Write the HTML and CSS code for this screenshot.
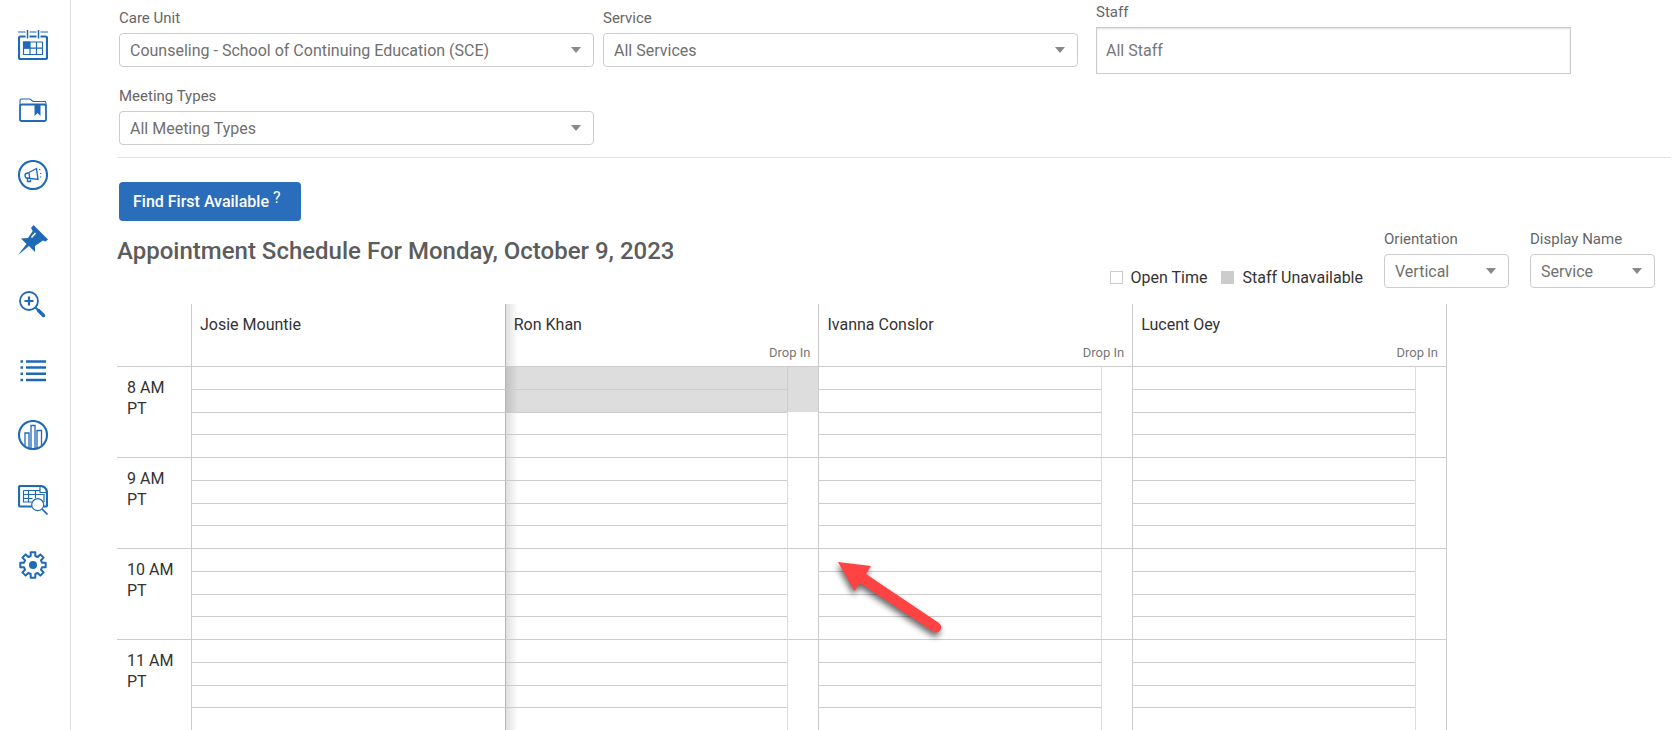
FILE: index.html
```html
<!DOCTYPE html>
<html lang="en">
<head>
    <meta charset="UTF-8">
    <meta name="viewport" content="width=device-width, initial-scale=1.0">
    <title>Appointment Schedule</title>
    <link rel="stylesheet" href="styles.css">
</head>
<body>

    <nav class="sidebar" aria-label="Main">
        <a href="#" aria-label="Calendar">
            <svg viewBox="0 0 30 30">
                <path d="M0 2h7.500M11.500 2h7M22.500 2H30" stroke-width="1.200"/>
                <path d="M9.500 0v8.500M20.500 0v8.500" stroke-width="1.500"/>
                <path d="M7.500 6.500H2.500Q1 6.500 1 8v19.500Q1 29 2.500 29h25q1.500 0 1.500-1.500V8q0-1.500-1.500-1.500h-5M11.500 6.500h7" stroke-width="2.200"/>
                <path d="M5.500 12h19v12.500h-19zM12 12v12.500M18.500 12v12.500M5.500 18.200h19" stroke-width="1.200"/>
                <path class="solid" d="M5 11.500h7v7H5z"/>
            </svg>
        </a>
        <a href="#" aria-label="Cases">
            <svg viewBox="0 0 30 30">
                <path d="M2 11V5.500L3 4h9l3 2.500h12.500l.5 2V11" stroke-width="1.100"/>
                <path d="M2 11.500Q2 9.500 4 9.500h22q2 0 2 2v13q0 1.500-1.500 1.500h-23Q2 26 2 24.500z" stroke-width="1.800"/>
                <path class="solid" d="M16.500 9.500h6v11.500l-3-3-3 3z"/>
            </svg>
        </a>
        <a href="#" aria-label="Campaigns">
            <svg viewBox="0 0 30 30">
                <circle cx="15" cy="15" r="14" stroke-width="2.100"/>
                <path d="M10 13l8.500-4.500 1.500 11-10-1.500q-3 .5-3-2.500 0-2.500 3-2.500zM11 13l.8 5M9.500 18.500v3h3v-3" stroke-width="1.400"/>
                <path d="M21 9.500h1.300M22 13.500h1.300M22 17h1.300" stroke-width="1.200"/>
            </svg>
        </a>
        <a href="#" aria-label="Pinned">
            <svg viewBox="0 0 30 30">
                <path class="solid" d="M15.500 0L30 14.500l-2.500 2L25 15.500l-8 5.500v6l-6-6L0 30l8.500-11L3 13.500l7-.5 4.700-7-1.700-3z"/>
                <path class="shine" d="M13.500 12.500l4-4.500" stroke-width="1.500"/>
            </svg>
        </a>
        <a href="#" aria-label="Advanced search">
            <svg viewBox="0 0 30 30">
                <circle cx="11" cy="11" r="9" stroke-width="1.800"/>
                <path d="M6.500 11h9M11 6.500v9" stroke-width="2.200"/>
                <path d="M17.500 17.500l4 4" stroke-width="2"/>
                <path d="M20.500 20.500l5 5" stroke-width="3.500" stroke-linecap="round"/>
            </svg>
        </a>
        <a href="#" aria-label="Lists">
            <svg viewBox="0 0 30 30">
                <path d="M2.500 6.500h2.500M8 6.500h20M2.500 12.500h2.500M8 12.500h20M2.500 18.800h2.500M8 18.800h20M2.500 25h2.500M8 25h20" stroke-width="2.600"/>
            </svg>
        </a>
        <a href="#" aria-label="Reports">
            <svg viewBox="0 0 30 30">
                <circle cx="15" cy="15" r="14" stroke-width="2.100"/>
                <path d="M7 26V13h4v15M13 28V5.500h4V28M19 28V10.500h4.500V26" stroke-width="1.300"/>
            </svg>
        </a>
        <a href="#" aria-label="Report search">
            <svg viewBox="0 0 30 30">
                <path d="M14 21.500H2.500Q1 21.500 1 20V2.500Q1 1 2.500 1H23q6 1 6 7v12q0 1.500-1.500 1.500H26" stroke-width="2.200"/>
                <path d="M22 1.500v6h6.500M5.500 5.500H22M5.500 5.500V17H14M5.500 9.500H26M5.500 13.500h9M10.500 5.500V17M17.500 5.500V13M26 9v8" stroke-width="1.200"/>
                <circle class="lens" cx="19.700" cy="19.700" r="6" stroke-width="1.200"/>
                <path d="M24 24l5.500 5.500" stroke-width="1.700"/>
            </svg>
        </a>
        <a href="#" aria-label="Settings">
            <svg viewBox="-15 -15 30 30">
                <path d="M-2.300-9V-12.700H2.300V-9L4.740-7.990L7.350-10.600L10.600-7.350L7.990-4.740L9-2.300H12.700V2.300H9L7.990 4.740L10.600 7.350L7.350 10.600L4.740 7.990L2.300 9V12.700H-2.300V9L-4.740 7.990L-7.350 10.600L-10.600 7.350L-7.990 4.740L-9 2.300H-12.700V-2.300H-9L-7.990-4.740L-10.600-7.350L-7.350-10.600L-4.740-7.990z" stroke-width="2" stroke-linejoin="round"/>
                <circle class="solid" r="4"/>
            </svg>
        </a>
    </nav>

    <main class="content">
        <form class="filters">
            <div class="field">
                <label for="careUnit">Care Unit</label>
                <select id="careUnit"><option>Counseling - School of Continuing Education (SCE)</option></select>
            </div>
            <div class="field">
                <label for="service">Service</label>
                <select id="service"><option>All Services</option></select>
            </div>
            <div class="field staff">
                <label for="staff">Staff</label>
                <input type="text" id="staff" placeholder="All Staff">
            </div>
            <div class="field">
                <label for="meetingTypes">Meeting Types</label>
                <select id="meetingTypes"><option>All Meeting Types</option></select>
            </div>
        </form>

        <hr>

        <button type="button" class="find-button">Find First Available<span class="help">?</span></button>

        <div class="title-row">
            <h1>Appointment Schedule For Monday, October 9, 2023</h1>
            <div class="legend">
                <span class="swatch"></span>Open Time
                <span class="swatch unavailable"></span>Staff Unavailable
            </div>
            <div class="field small">
                <label for="orientation">Orientation</label>
                <select id="orientation"><option>Vertical</option></select>
            </div>
            <div class="field small">
                <label for="displayName">Display Name</label>
                <select id="displayName"><option>Service</option></select>
            </div>
        </div>

        <div class="schedule">
            <table>
                <colgroup>
                    <col class="col-time">
                    <col><col class="col-drop">
                    <col><col class="col-drop">
                    <col><col class="col-drop">
                    <col><col class="col-drop">
                </colgroup>
                <thead>
                    <tr>
                        <td></td>
                        <th colspan="2">Josie Mountie</th>
                        <th colspan="2" class="shade">Ron Khan<span class="drop-label">Drop In</span></th>
                        <th colspan="2">Ivanna Conslor<span class="drop-label">Drop In</span></th>
                        <th colspan="2">Lucent Oey<span class="drop-label">Drop In</span></th>
                    </tr>
                </thead>
                <tbody>
                    <tr>
                        <th rowspan="4">8 AM PT</th>
                        <td colspan="2"></td>
                        <td class="shade off"></td><td rowspan="2" class="drop off"></td>
                        <td></td><td rowspan="4" class="drop"></td>
                        <td></td><td rowspan="4" class="drop"></td>
                    </tr>
                    <tr><td colspan="2"></td><td class="shade off"></td><td></td><td></td></tr>
                    <tr class="short"><td colspan="2"></td><td class="shade"></td><td rowspan="2" class="drop rest"></td><td></td><td></td></tr>
                    <tr><td colspan="2"></td><td class="shade"></td><td></td><td></td></tr>
                </tbody>
                <tbody>
                    <tr>
                        <th rowspan="4">9 AM PT</th>
                        <td colspan="2"></td>
                        <td class="shade"></td><td rowspan="4" class="drop"></td>
                        <td></td><td rowspan="4" class="drop"></td>
                        <td></td><td rowspan="4" class="drop"></td>
                    </tr>
                    <tr><td colspan="2"></td><td class="shade"></td><td></td><td></td></tr>
                    <tr class="short"><td colspan="2"></td><td class="shade"></td><td></td><td></td></tr>
                    <tr><td colspan="2"></td><td class="shade"></td><td></td><td></td></tr>
                </tbody>
                <tbody>
                    <tr>
                        <th rowspan="4">10 AM PT</th>
                        <td colspan="2"></td>
                        <td class="shade"></td><td rowspan="4" class="drop"></td>
                        <td></td><td rowspan="4" class="drop"></td>
                        <td></td><td rowspan="4" class="drop"></td>
                    </tr>
                    <tr><td colspan="2"></td><td class="shade"></td><td></td><td></td></tr>
                    <tr class="short"><td colspan="2"></td><td class="shade"></td><td></td><td></td></tr>
                    <tr><td colspan="2"></td><td class="shade"></td><td></td><td></td></tr>
                </tbody>
                <tbody>
                    <tr>
                        <th rowspan="4">11 AM PT</th>
                        <td colspan="2"></td>
                        <td class="shade"></td><td rowspan="4" class="drop"></td>
                        <td></td><td rowspan="4" class="drop"></td>
                        <td></td><td rowspan="4" class="drop"></td>
                    </tr>
                    <tr><td colspan="2"></td><td class="shade"></td><td></td><td></td></tr>
                    <tr class="short"><td colspan="2"></td><td class="shade"></td><td></td><td></td></tr>
                    <tr><td colspan="2"></td><td class="shade"></td><td></td><td></td></tr>
                </tbody>
            </table>

            <svg class="arrow" viewBox="0 0 120 90" aria-hidden="true">
                <path d="M8 8l33 4-5 8 73 49a5 5 0 0 1-6 8.500L30 29l-5.500 8z"/>
            </svg>
        </div>
    </main>

</body>
</html>
```
FILE: styles.css
```css
* {
    box-sizing: border-box;
}

body {
    margin: 0;
    min-height: 100vh;
    display: flex;
    background: #fff;
    color: #333;
    font-family: Roboto, sans-serif;
    font-size: 16px;
    line-height: 21px;
}

/* Left icon menu */
.sidebar {
    flex: none;
    width: 71px;
    padding: 12px 0;
    border-right: 1px solid #ddd;
}

.sidebar a {
    display: flex;
    align-items: center;
    height: 65px;
    padding-left: 18px;
}

.sidebar svg {
    width: 30px;
    height: 30px;
    fill: none;
    stroke: #1f69b7;
}

.sidebar .solid {
    fill: #1f69b7;
    stroke: none;
}

.sidebar .shine {
    stroke: #fff;
}

.sidebar .lens {
    fill: #fff;
}

/* Main area */
.content {
    flex: 1;
    min-width: 0;
    padding: 2px 7px 0 46px;
}

/* The empty third column widens the gap before the staff box */
.filters {
    display: grid;
    grid-template-columns: 1fr 1fr 0 1fr;
    gap: 6px 9px;
    align-items: start;
    padding: 0 100px 0 2px;
}

.field {
    padding-top: 6px;
}

.field label {
    display: block;
    margin-bottom: 5px;
    color: #666;
    font-size: 15px;
    line-height: 20px;
}

.field select,
.field input {
    display: block;
    width: 100%;
    height: 34px;
    padding: 0 10px;
    border: 1px solid #ccc;
    background: #fff;
    color: #707070;
    font-family: inherit;
    font-size: 16px;
}

.field select {
    appearance: none;
    border-radius: 4px;
    background: #fff url("data:image/svg+xml,%3Csvg xmlns='http://www.w3.org/2000/svg' width='10' height='6'%3E%3Cpath d='M0 0h10L5 6z' fill='%23888'/%3E%3C/svg%3E") no-repeat right 12px center;
}

.field.staff {
    grid-column: 4;
    padding-top: 0;
}

.field.staff input {
    height: 47px;
    padding: 0 9px;
    box-shadow: inset 0 1px 2px #ddd;
}

.field input::placeholder {
    color: #777;
    opacity: 1;
}

hr {
    margin: 12px 0 24px;
    border: 0;
    border-top: 1px solid #e2e2e2;
}

.find-button {
    display: block;
    height: 39px;
    margin-left: 2px;
    padding: 0 20px 0 14px;
    border: 0;
    border-radius: 4px;
    background: #2a6ebb;
    color: #fff;
    font-family: inherit;
    font-size: 16px;
    font-weight: 500;
}

.help {
    margin-left: 4px;
    vertical-align: 4px;
    font-weight: 400;
    line-height: 0;
}

.title-row {
    display: flex;
    align-items: flex-end;
    padding: 2px 16px 16px 0;
}

h1 {
    flex: 1;
    align-self: flex-start;
    margin: 12px 0 0;
    color: #5c5c5c;
    font-size: 24px;
    font-weight: 500;
    line-height: 32px;
}

.legend {
    display: flex;
    align-items: center;
}

.swatch {
    width: 13px;
    height: 13px;
    margin-right: 8px;
    border: 1px solid #ccc;
}

.unavailable {
    margin-left: 14px;
    background: #ccc;
}

.small {
    width: 125px;
    margin-left: 21px;
}

/* Schedule grid */
.schedule {
    position: relative;
    padding-right: 224px;
}

table {
    width: 100%;
    table-layout: fixed;
    border-collapse: separate;
    border-spacing: 0;
    border-right: 1px solid #ccc;
}

.col-time {
    width: 74px;
}

.col-drop {
    width: 31px;
}

th,
td {
    padding: 0;
    font-weight: 400;
    text-align: left;
    vertical-align: top;
}

thead th {
    height: 62px;
    padding: 10px 8px 3px;
    border-left: 1px solid #ccc;
}

.drop-label {
    display: block;
    margin-top: 7px;
    color: #777;
    font-size: 13px;
    text-align: right;
}

tbody th {
    padding: 10px 14px 0 10px;
    border-top: 1px solid #ccc;
}

tbody tr {
    height: 23px;
}

tbody .short {
    height: 22px;
}

tbody td {
    border-top: 1px solid #ccc;
    border-left: 1px solid #ccc;
}

tbody .drop {
    border-left-color: #ddd;
}

tbody .rest {
    border-top: 0;
}

.off {
    background: #ddd;
}

.off.drop {
    border-left-color: #ccc;
}

.shade {
    border-left-color: #b5b5b5 !important;
    background-image: linear-gradient(to right, rgba(0, 0, 0, 0.12), rgba(0, 0, 0, 0) 12px);
}

.arrow {
    position: absolute;
    top: 250px;
    left: 713px;
    width: 120px;
    height: 90px;
    fill: #ff4343;
    filter: drop-shadow(-1px 4px 3px rgba(0, 0, 0, 0.6));
}
```
